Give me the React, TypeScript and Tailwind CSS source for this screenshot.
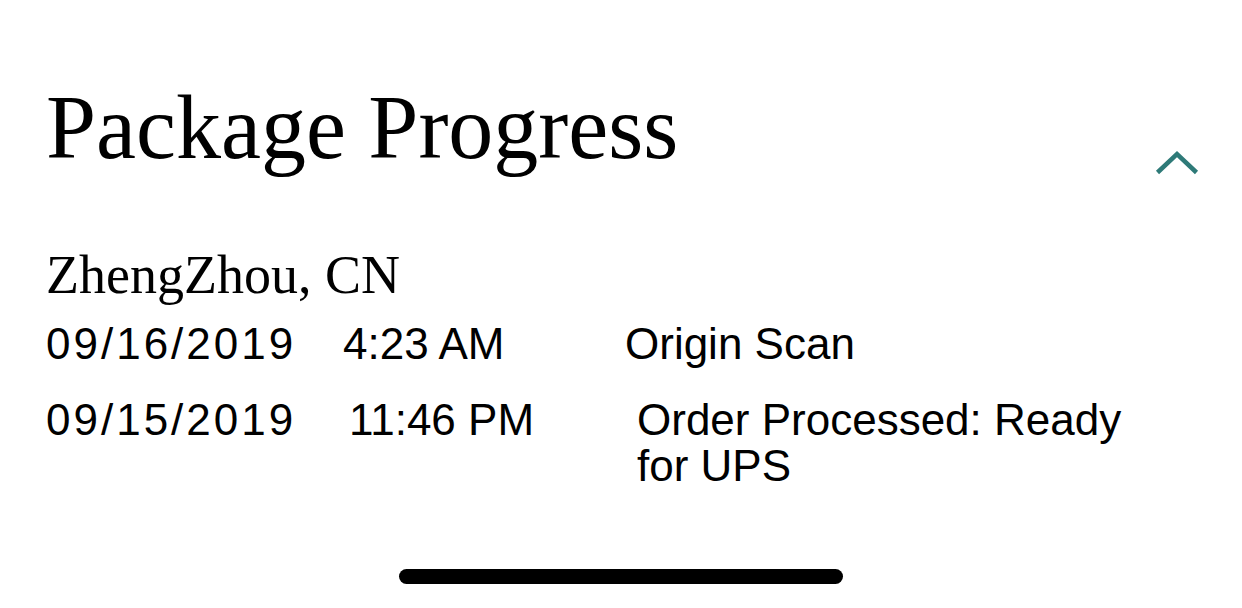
const rows = [
  { date: "09/16/2019", time: "4:23 AM", status: "Origin Scan", timeClass: "w-[282px]" },
  { date: "09/15/2019", time: "11:46 PM", status: "Order Processed: Ready for UPS", timeClass: "w-[294px] pl-[6px]" },
];

function ChevronUp() {
  return (
    <svg width="44" height="26" viewBox="0 0 44 26" fill="none" className="mt-[67px] -mr-[2px]">
      <polyline
        points="2.5,22.5 22,4 41.5,22.5"
        stroke="#2e7a78"
        strokeWidth="4.5"
        strokeLinecap="butt"
        strokeLinejoin="miter"
      />
    </svg>
  );
}

export default function App() {
  return (
    <div className="flex h-[608px] w-[1242px] flex-col bg-white text-black">
      <div className="flex items-start justify-between pl-[46px] pr-[45px] pt-[83px]">
        <h1 className="font-['Liberation_Serif',serif] text-[90px] leading-none">Package Progress</h1>
        <ChevronUp />
      </div>

      <div className="mt-[72px] px-[46px]">
        <h2 className="font-['Liberation_Serif',serif] text-[54px] leading-none">ZhengZhou, CN</h2>

        <div className="mt-[19px] flex flex-col gap-[30px] font-['Liberation_Sans',sans-serif] text-[44px] leading-[46px]">
          {rows.map((r) => (
            <div key={r.date} className="flex items-start">
              <span className="w-[297px] shrink-0 tracking-[3px]">{r.date}</span>
              <span className={`${r.timeClass} shrink-0`}>{r.time}</span>
              <span className="w-[520px]">{r.status}</span>
            </div>
          ))}
        </div>
      </div>

      <div className="mt-auto mb-[24px] h-[15px] w-[444px] self-center rounded-full bg-black" />
    </div>
  );
}
